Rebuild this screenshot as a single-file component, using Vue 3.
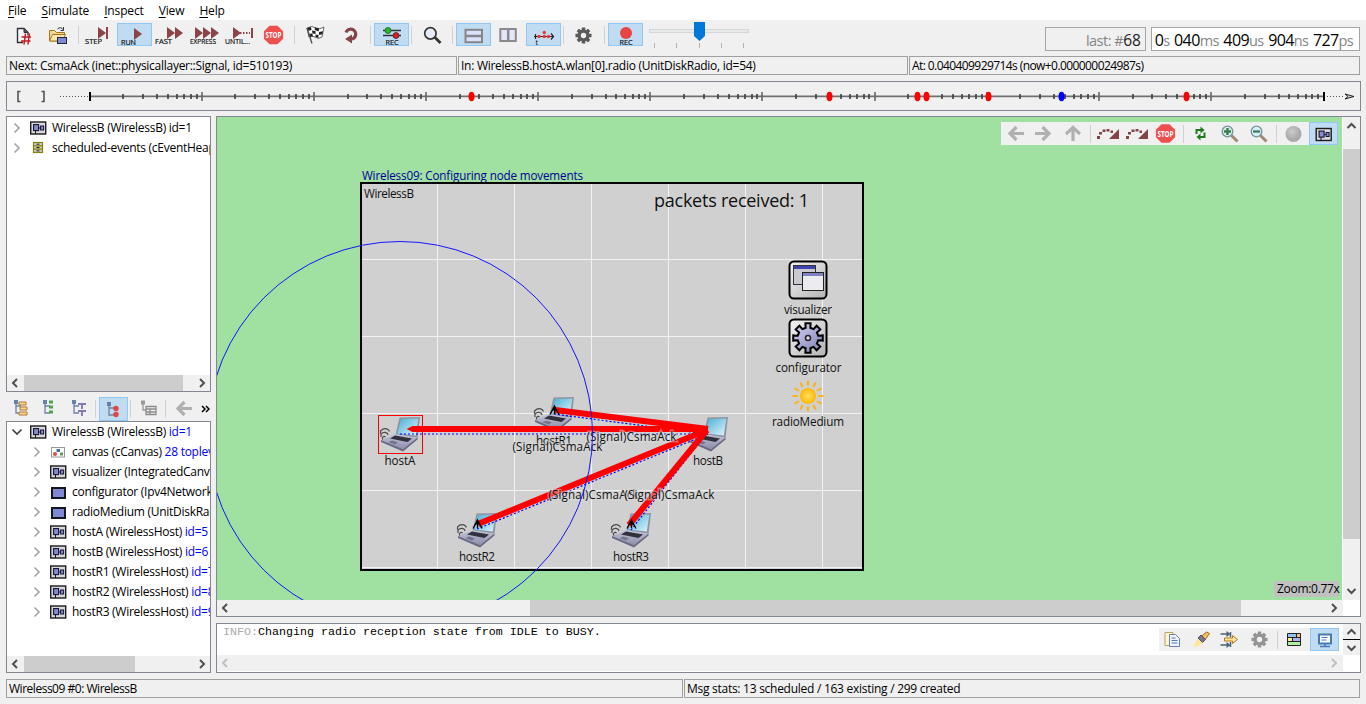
<script setup>
const moduleIcon = `<rect x=".700" y="1" width="15" height="12" fill="#d8d8dc" stroke="#1c1c1c" stroke-width="1.400"/><rect x="3.600" y="3.600" width="5" height="6" fill="#848cd2" stroke="#15152c" stroke-width="1.100"/><rect x="10.600" y="5" width="3" height="4" fill="#848cd2" stroke="#15152c"/><path d="M8.600 7H10.600M5.500 9.500V13" stroke="#15152c"/>`
const simpleIcon = `<rect x="2" y="3" width="13" height="10" fill="#7f88d4" stroke="#15171f" stroke-width="2"/>`
const canvasIcon = `<rect x="1.5" y="2.500" width="13" height="9.5" fill="#fff" stroke="#999"/><rect x="6.5" y="4" width="3.5" height="3" fill="#3f70a8"/><circle cx="5" cy="9" r="2" fill="#e04a3f"/><rect x="10" y="7.500" width="3" height="3" fill="#66975a"/>`
const heapIcon = `<rect x="3.500" y="1.500" width="9" height="10" fill="#cfcfc0" stroke="#85800c" stroke-width="1.200"/><path d="M3 4.800H13M3 8.200H13" stroke="#85800c" stroke-width="1.200"/><path d="M6.500 3.200H9.500M6.500 6.500H9.500M6.500 9.900H9.500" stroke="#222"/>`
const stop = (x, y) => `<path d="M${x - 4} ${y - 9.3}h8l5.6 5.6v7.4l-5.6 5.6h-8l-5.6-5.6v-7.4z" fill="#ee4f4f"/><text x="${x - 8}" y="${y + 3}" font-size="8" font-weight="bold" textLength="16" lengthAdjust="spacingAndGlyphs" fill="#fff">STOP</text>`
const cap = (x, t, w, y = 21.3) => `<text x="${x}" y="${y}" font-size="7.6" textLength="${w}" lengthAdjust="spacingAndGlyphs" fill="#111" stroke="#111" stroke-width=".2">${t}</text>`
const tri = x => `<path d="M${x} 4v12l8-6z" fill="#8d4448"/>`
const gear = (x, y, c, hole) => {
  let teeth = ''
  for (let i = 0; i < 8; i++) teeth += `<rect x="-1.8" y="-8" width="3.6" height="4" rx=".6" transform="rotate(${i * 45})"/>`
  return `<g transform="translate(${x} ${y})" fill="${c}">${teeth}<circle r="6"/><circle r="2.7" fill="${hole}"/></g>`
}
const lens = (fill, ring, x, y) => `<path d="M${x + 4} ${y + 4}l6 6" stroke="${ring}" stroke-width="3"/><circle cx="${x}" cy="${y}" r="5.3" fill="${fill}" stroke="#7294a0" stroke-width="1.3"/>`
const treeStem = `<path d="M8 5V16H13M8 9H13" fill="none" stroke="#6c83a3" stroke-width="1.3"/><rect x="6" y="3" width="4" height="4" fill="#6582aa"/>`

const icons = {
  fresh: `<path d="M17 19.500H11.500V5.500h6.500l4 4v3" fill="#f7f7fa" stroke="#30303c" stroke-width="1.4"/><path d="M18 5.500v4h4" fill="#555" stroke="#30303c"/><path d="M19.500 10.500l-1.500 11M23.500 10.500l-1.500 11M15.500 14h9.500M15 18h9.500" stroke="#c41a22" stroke-width="1.500" fill="none"/>`,
  open: `<path d="M8.500 18V7.500h5l2 2h8v8.500z" fill="#f3d68e" stroke="#a8731c"/><path d="M8.500 18l3-6.500h13l-3 6.500z" fill="#fbe7ac" stroke="#a8731c"/><path d="M16.500 6q3-3 6 1M22.500 4v3.500h-3" fill="none" stroke="#333"/><rect x="16.500" y="14.500" width="9" height="6" fill="#7f88d4" stroke="#26263c"/>`,
  step: tri(16) + `<rect x="24" y="4" width="2" height="12" fill="#8d4448"/>` + cap(3, 'STEP', 17),
  run: `<path d="M17 5v12l8-6z" fill="#8d4448"/>` + cap(4, 'RUN', 15, 22),
  fast: tri(15) + tri(23) + cap(3, 'FAST', 17),
  express: tri(8) + tri(16) + tri(24) + cap(3, 'EXPRESS', 26),
  until: tri(11) + `<path d="M18 10h10" stroke="#8d4448" stroke-width="2" stroke-dasharray="1.5 1.5"/><rect x="29" y="5" width="2" height="10" fill="#8d4448"/>` + cap(3, 'UNTIL...', 25),
  stop: stop(16.5, 12),
  flag: `<g transform="translate(9 3)"><path d="M0 2q5-3 9 0 4 2 8-1l-2 10q-4 3-7 0-3-2-6 0z" fill="#fff" stroke="#444" stroke-width=".8"/><path d="M0 2l4-1 .5 3-4 1zM8 1.5l4 1-.3 3-4-1.5zM5 4.5l3.5.5v3l-3-.5zM12 6l4-.7-.6 3-3.5.6zM1.5 8l3.8-.5.7 3-4 .5zM8.5 8.5l3 .5v3l-3-1z" fill="#222"/><path d="M0 2l5 15.5" stroke="#555" stroke-width="1.4"/></g>`,
  rerun: `<g transform="translate(1 0)"><path d="M12 9.500a5 5 0 1 1 6 6.500" fill="none" stroke="#85464a" stroke-width="3.200"/><path d="M11 16l7-4.500v9z" fill="#85464a"/></g>`,
  recmsg: `<path d="M9 7.5h18M9 12.5h18" stroke="#333" stroke-width="1.5"/><circle cx="14" cy="7.5" r="3" fill="#2ab52f" stroke="#17651b" stroke-width=".8"/><circle cx="22" cy="12.5" r="3" fill="#c9262b" stroke="#641c1c" stroke-width=".8"/>` + cap(11.5, 'REC', 13, 22),
  find: `<path d="M19.500 14l6 6" stroke="#353535" stroke-width="2.800"/><circle cx="15.400" cy="10.400" r="5.700" fill="#e6ebfa" stroke="#353535" stroke-width="1.700"/>`,
  rows: `<rect x="9.5" y="6.8" width="16.5" height="12.4" fill="#dae0f8" stroke="#85868c" stroke-width="2"/><path d="M9 13h17" stroke="#85868c" stroke-width="2.5"/>`,
  cols: `<rect x="9.3" y="6" width="15.5" height="12" fill="#e2e6f6" stroke="#8a8a8e" stroke-width="2"/><path d="M17.2 6v12" stroke="#8a8a8e" stroke-width="2.5"/>`,
  timeline: `<path d="M8 13.5h19M9.500 11v5M25 10.500l2.500 3-2.500 3" stroke="#222" fill="none" stroke-width="1.2"/><g fill="#e63636"><circle cx="13" cy="13.5" r="1.7"/><circle cx="18.3" cy="9.5" r="1.7"/><circle cx="18.3" cy="13.5" r="1.7"/><circle cx="22.5" cy="13.5" r="1.7"/></g><text x="9.500" y="21.500" font-size="7">t</text>`,
  gear: gear(16.5, 12.5, '#5a5a5a', '#f0f0f0'),
  record: `<circle cx="18" cy="10" r="6" fill="#e74545"/>` + cap(11.5, 'REC', 13, 22),
  back: `<path d="M23 11.500H10M15.500 5L9 11.500l6.500 6.500" stroke="#b0b0b0" stroke-width="3.200" fill="none"/>`,
  forward: `<path d="M5 11.500H19M12.500 5l6.500 6.500-6.500 6.500" stroke="#b0b0b0" stroke-width="3.200" fill="none"/>`,
  up: `<path d="M14 19V6M7 12l7-6.500 7 6.500" stroke="#b0b0b0" stroke-width="3.200" fill="none"/>`,
  jump: `<path d="M3 14h3v3H3zM5 10h3v2.500H5zM8.500 7.500h3V10h-3zM12.500 7h3v2.500h-3zM16.500 8.500h2.500V11h-2.500z" fill="#824447"/><path d="M25 7v10h-10l3-3 2-2z" fill="#824447"/>`,
  stopSmall: stop(13.5, 11.5),
  refresh: `<path d="M9.500 12V8h5" stroke="#1c7d18" stroke-width="2" fill="none"/><path d="M13.500 4.500v7l4-3.500z" fill="#1c7d18"/><path d="M17.500 10.500v4.500h-5" stroke="#1c7d18" stroke-width="2" fill="none"/><path d="M13.500 11.500v7l-4-3.500z" fill="#1c7d18"/>`,
  zoomin: lens('#d8ebe5', '#a18a72', 11.5, 9.5) + `<path d="M8 9.500h7M11.500 6v7" stroke="#35804d" stroke-width="2.400"/>`,
  zoomout: lens('#d8eff3', '#a18a72', 11.5, 9.5) + `<path d="M8 9.500h7" stroke="#3c7560" stroke-width="2.200"/>`,
  ball: `<defs><radialGradient id="ball" cx=".4" cy=".35"><stop offset="0" stop-color="#cbcbcb"/><stop offset="1" stop-color="#aaaaaa"/></radialGradient></defs><circle cx="13.500" cy="12" r="8" fill="url(#ball)"/>`,
  network: `<g transform="translate(6.500 5.500)">${moduleIcon}</g>`,
  treeFolders: `<g transform="translate(2 0)">${treeStem}<path d="M11 5h7v3h-7zM12 10h7v3h-7zM11 15h8v3h-8z" fill="#f6d893" stroke="#b37b31"/></g>`,
  treeDots: `<g transform="translate(2 0)">${treeStem}<path d="M12 5h4M12 10h4M12 15h4" stroke="#4ba544" stroke-width="3"/></g>`,
  treeText: `<g transform="translate(2 0)">${treeStem}<path d="M12 7h8M16 7v5M12 14h8M16 14v5" stroke="#8777b5" stroke-width="1.900"/></g>`,
  treeRed: `<g transform="translate(2 2)">${treeStem}<circle cx="15" cy="9.500" r="2.700" fill="#e34444"/><circle cx="15" cy="15.500" r="2.700" fill="#e34444"/></g>`,
  treeGrid: `<g transform="translate(1 1)"><path d="M8 5V12H11" fill="none" stroke="#999" stroke-width="1.300"/><rect x="6" y="2.500" width="4" height="4" fill="#999"/><path d="M11 8.500h10v8h-10zM11 11h10M11 14h10M15 11v6" stroke="#8c8c8c" fill="none" stroke-width="1.300"/></g>`,
  copy: `<path d="M6 4.500h8v13h-8z" fill="#fff5ce" stroke="#b6a46a"/><path d="M10.500 6.500h6l4 4v8h-10z" fill="#edf3ff" stroke="#6b7fa5"/><path d="M12.500 10h4M12.500 12.500h6M12.500 15h6" stroke="#527bb4"/>`,
  light: `<path d="M12.500 9l6-5 3 1.500-5 7z" fill="#f4be58" stroke="#a96727"/><path d="M10 10l3-3 4.500 4.500-3 3z" fill="#7d7584" stroke="#515365"/><path d="M9.500 10.500l5 4.500-4 3-5 .5z" fill="#ffe796"/>`,
  filter: `<path d="M3.500 6h8M3.500 17h8M13.500 4v5M13.500 14v5" stroke="#4b6177" stroke-width="1.500"/><path d="M9.500 3l4 3-4 3M9.500 14l4 3-4 3" fill="#4b6177"/><path d="M7.500 10h8V7.500l5 4-5 4V13h-8z" fill="#ffe5a1" stroke="#b57819"/>`,
  gearSmall: gear(13.5, 11.5, '#949494', '#f0f0f0'),
  table: `<g transform="translate(-1 0)"><rect x="7.500" y="5.500" width="13" height="12" fill="#fff"/><path d="M8 6h8v3h-8z" fill="#8dc4f4"/><path d="M17 6h3v3h-3z" fill="#efc17b"/><path d="M8 10h4v3h-4z" fill="#faef8a"/><path d="M13 10h7v3h-7z" fill="#b1aff4"/><path d="M8 14h12v3h-12z" fill="#acf0a4"/><path d="M7.500 5.500h13v12h-13zM7.500 9.500h13M7.500 13.500h13M16.500 5.500v4M12.500 9.500v4" stroke="#222" fill="none"/></g>`,
  monitor: `<rect x="9" y="6.500" width="12" height="9" fill="#fff" stroke="#4979b5" stroke-width="2"/><path d="M11.500 9.500h6M11.500 12h5" stroke="#4979b5"/><path d="M15 16v2M10 18.500h10" stroke="#4979b5" stroke-width="1.600"/>`
}
const mainTools = ['fresh', 'open', '|', 'step', 'run*', 'fast', 'express', 'until', 'stop', '|', 'flag', 'rerun', '|', 'recmsg*', '|', 'find', '|', 'rows*', 'cols', 'timeline*', '|', 'gear', '|', 'record*']
const treeTools = ['treeFolders', 'treeDots', 'treeText', '|', 'treeRed*', '|', 'treeGrid', '|', 'back']
const canvasTools = ['back', 'forward', 'up', '|', 'jump', 'jump', 'stopSmall', '|', 'refresh', 'zoomin', 'zoomout', '|', 'ball', 'network*']
const logTools = ['copy', 'light', 'filter', 'gearSmall', '|', 'table', 'monitor*']
const pick = t => icons[t.replace('*', '')]

const topTree = [
  { icon: moduleIcon, text: 'WirelessB (WirelessB) id=1' },
  { icon: heapIcon, text: 'scheduled-events (cEventHeap)' }
]
const tree = [
  { icon: moduleIcon, text: 'WirelessB (WirelessB)', extra: 'id=1', root: true },
  { icon: canvasIcon, text: 'canvas (cCanvas)', extra: '28 toplevel' },
  { icon: moduleIcon, text: 'visualizer (IntegratedCanvas)', extra: '' },
  { icon: simpleIcon, text: 'configurator (Ipv4NetworkC)', extra: '' },
  { icon: simpleIcon, text: 'radioMedium (UnitDiskRadio)', extra: '' },
  { icon: moduleIcon, text: 'hostA (WirelessHost)', extra: 'id=5' },
  { icon: moduleIcon, text: 'hostB (WirelessHost)', extra: 'id=6' },
  { icon: moduleIcon, text: 'hostR1 (WirelessHost)', extra: 'id=7' },
  { icon: moduleIcon, text: 'hostR2 (WirelessHost)', extra: 'id=8' },
  { icon: moduleIcon, text: 'hostR3 (WirelessHost)', extra: 'id=9' }
]

const ticks = []
for (let d = 0; d < 11; d++) {
  for (let k = 1; k < 10; k++) ticks.push({ x: Math.floor(90 + 112.15 * (d + Math.log10(k))), major: k === 1 && d > 0 })
}
const events = [471.5, 829.5, 917.5, 926.5, 988.5, 1186.5]
const clock = [['0', 's'], ['040', 'ms'], ['409', 'us'], ['904', 'ns'], ['727', 'ps']]

const hosts = [
  { x: 400, y: 434, label: 'hostA', w: 31, ly: 465, waves: true },
  { x: 554, y: 414, label: 'hostR1', w: 36, ly: 445, waves: true },
  { x: 708, y: 434, label: 'hostB', w: 30, ly: 465 },
  { x: 477, y: 530, label: 'hostR2', w: 36, ly: 561, waves: true },
  { x: 631, y: 530, label: 'hostR3', w: 36, ly: 561, waves: true }
]
const signals = [[412, 429, 708, 429], [555, 410, 708, 429], [478, 524, 707, 430], [629, 525, 707, 430]]
const links = [[400, 434, 708, 434], [554, 414, 706, 434], [477, 529, 708, 434], [631, 530, 706, 434]]
const masts = [[554.5, 409], [477.5, 523], [631.5, 523]]
const captions = [[512.5, 451], [586.5, 441], [548.5, 499], [624.5, 499]]
const cog = Array.from({ length: 8 }, (_, i) => {
  const p = (r, a) => { const t = (i * 45 + a) * Math.PI / 180; return `${(r * Math.sin(t)).toFixed(2)},${(-r * Math.cos(t)).toFixed(2)}` }
  return [p(15, -10), p(15, 10), p(10.5, 13), p(10.5, 32)].join(' ')
}).join(' ')
</script>

<template>
  <div class="window">
    <nav class="menubar">
      <span><u>F</u>ile</span><span><u>S</u>imulate</span><span><u>I</u>nspect</span><span><u>V</u>iew</span><span><u>H</u>elp</span>
    </nav>
    <div class="toolbar">
      <template v-for="(t, i) in mainTools" :key="i">
        <i v-if="t === '|'" class="sep"></i>
        <span v-else class="tool" :class="{ on: t.endsWith('*') }"><svg width="35" height="24" v-html="pick(t)"></svg></span>
      </template>
      <svg class="slider" width="110" height="32">
        <rect x="6.500" y="9.500" width="99" height="3" fill="#e7eaea" stroke="#d6d6d6" />
        <path v-for="x in [11.5, 33.5, 56.5, 78.5, 100.5]" :key="x" :d="`M${x} 23v5`" stroke="#b5b5a8" />
        <path d="M51 2h11v14l-5.500 5-5.500-5z" fill="#0078d7" />
      </svg>
      <div class="event-box">last: #<b>68</b></div>
      <div class="clock"><span v-for="c in clock" :key="c[1]"><b>{{ c[0] }}</b>{{ c[1] }}</span></div>
    </div>
    <div class="info">
      <div>Next: CsmaAck (inet::physicallayer::Signal, id=510193)</div>
      <div>In: WirelessB.hostA.wlan[0].radio (UnitDiskRadio, id=54)</div>
      <div class="numeric">At: 0.040409929714s (now+0.000000024987s)</div>
    </div>
    <div class="timeline">
      <svg width="1352" height="27" viewBox="7 82 1352 27">
        <path d="M20.500 91.500H18V101.500H20.500M41.500 91.500H44V101.500H41.500" fill="none" stroke="#555" stroke-width="1.600" />
        <path d="M60 96.500H88M1327 96.500H1345" stroke="#555" stroke-dasharray="1 2" />
        <path d="M90 96.300H1324" stroke="#707070" stroke-width="1.800" />
        <path v-for="(t, i) in ticks" :key="i" :d="t.major ? `M${t.x} 92v9` : `M${t.x} 94v5`" :stroke="t.major ? '#666' : '#3c3c3c'" stroke-width="1.600" />
        <path d="M90 92v9M1324 92v9" stroke="#000" stroke-width="2" />
        <path d="M1345 94l9 2.500-9 2.500 3-2.500z" fill="#ccc" stroke="#111" stroke-width=".900" />
        <ellipse v-for="x in events" :key="x" :cx="x" cy="96.500" rx="3" ry="4.800" fill="#f00" />
        <ellipse cx="1061.500" cy="96.500" rx="3" ry="4.800" fill="#00f" />
      </svg>
    </div>

    <main class="main">
      <aside class="left">
        <section class="panel top-tree">
          <div class="rows">
            <div v-for="r in topTree" :key="r.text" class="row">
              <svg class="chev" width="8" height="12"><path d="M1.500 1.500l4.500 4.500-4.500 4.500" /></svg>
              <svg class="glyph" width="17" height="14" v-html="r.icon"></svg><span>{{ r.text }}</span>
            </div>
          </div>
          <div class="hbar"><svg width="17" height="16"><path d="M10 4L6 8l4 4" /></svg><i class="thumb first"></i><svg width="17" height="16"><path d="M7 4l4 4-4 4" /></svg></div>
        </section>
        <div class="toolbar small">
          <template v-for="(t, i) in treeTools" :key="i">
            <i v-if="t === '|'" class="sep"></i>
            <span v-else class="tool" :class="{ on: t.endsWith('*') }"><svg width="29" height="24" v-html="pick(t)"></svg></span>
          </template>
          <svg width="12" height="24"><path d="M4 9l3 3-3 3M8 9l3 3-3 3" stroke="#000" stroke-width="1.500" fill="none" /></svg>
        </div>
        <section class="panel bottom-tree">
          <div class="rows">
            <div v-for="r in tree" :key="r.text" class="row" :class="{ child: !r.root }">
              <svg class="chev" :class="{ open: r.root }" width="8" height="12"><path d="M1.500 1.500l4.500 4.500-4.500 4.500" /></svg>
              <svg class="glyph" width="17" height="14" v-html="r.icon"></svg><span>{{ r.text }} <em>{{ r.extra }}</em></span>
            </div>
          </div>
          <div class="hbar"><svg width="17" height="16"><path d="M10 4L6 8l4 4" /></svg><i class="thumb second"></i><svg width="17" height="16"><path d="M7 4l4 4-4 4" /></svg></div>
        </section>
      </aside>

      <section class="right">
        <div class="panel canvas-panel">
          <div class="canvas">
            <svg class="scene" width="1125" height="483" viewBox="217 117 1125 483">
              <defs>
                <linearGradient id="screen" x1="0" y1="0" x2="1" y2="1"><stop offset="0" stop-color="#49b0d7" /><stop offset="1" stop-color="#dff4fb" /></linearGradient>
                <linearGradient id="base" x1="0" y1="0" x2="0" y2="1"><stop offset="0" stop-color="#c4c4da" /><stop offset="1" stop-color="#8d8da9" /></linearGradient>
                <linearGradient id="tile" x1="0" y1="0" x2="1" y2="1"><stop offset="0" stop-color="#f5f5f5" /><stop offset="1" stop-color="#b2b2b2" /></linearGradient>
                <linearGradient id="cogfill" x1="0" y1="0" x2="1" y2="1"><stop offset="0" stop-color="#d5d5f2" /><stop offset="1" stop-color="#7d7db5" /></linearGradient>
                <radialGradient id="sun"><stop offset="0" stop-color="#ffe163" /><stop offset="1" stop-color="#ffb600" /></radialGradient>
                <g id="laptop">
                  <path d="M-.500-16.500L20-17 17.500 4-4.500 1z" fill="#8f949f" />
                  <path d="M1-15L18.300-15.500 15.800 1.500-2.500-.5z" fill="url(#screen)" />
                  <path d="M-5.500 0L17.500 3.500 3 15-19 6z" fill="url(#base)" />
                  <path d="M-5 1.500L12 4.500 7.500 8-10 4.500z" fill="#30313a" />
                  <path d="M-8 6.500l6 1.700-3 2.300-6.500-2.200z" fill="#74758d" />
                  <path d="M-19 6L3 15 17.500 3.500v2L3 17.500-19 8z" fill="#696a83" />
                </g>
                <g id="waves" fill="none" stroke="#4a4a4a" stroke-width="1.200">
                  <path d="M-17.500 5.500v-2q1.500-2 3-.5M-19 3v-3q3-3 6.500-.5l.5 1.500M-19.500-.500v-2.500q4-4 8-1l1 1.500" />
                </g>
              </defs>
              <text x="362" y="180" textLength="221" fill="#000098">Wireless09: Configuring node movements</text>
              <rect x="361" y="183" width="502" height="387" fill="#d0d0d0" stroke="#000" stroke-width="2" />
              <path d="M437.500 184V569M514.500 184V569M591.500 184V569M668.500 184V569M745.500 184V569M822.500 184V569M362 259.500H862M362 336.500H862M362 413.500H862M362 490.500H862M362 567.500H862" stroke="#f2f2f2" />
              <text x="364" y="198" textLength="50">WirelessB</text>
              <text class="counter" x="654" y="207" textLength="155">packets received: 1</text>

              <g transform="translate(808 280)">
                <rect x="-18.500" y="-18.500" width="37" height="37" rx="4.500" fill="url(#tile)" stroke="#000" stroke-width="2" />
                <rect x="-14.500" y="-14.500" width="22" height="19" fill="#c9c9cf" stroke="#333" /><rect x="-14" y="-14" width="21" height="3" fill="#3f43b2" />
                <rect x="-5.500" y="-7.500" width="21" height="18" fill="#ececf0" stroke="#222" /><rect x="-5" y="-7" width="20" height="3" fill="#8182c2" />
              </g>
              <text x="784" y="314" textLength="48">visualizer</text>
              <g transform="translate(808 338)">
                <rect x="-18.500" y="-18.500" width="37" height="37" rx="4.500" fill="url(#tile)" stroke="#000" stroke-width="2" />
                <polygon :points="cog" fill="url(#cogfill)" stroke="#000" stroke-width="2" />
                <circle r="2.500" fill="#ddd" stroke="#222" stroke-width="1.500" />
              </g>
              <text x="775.500" y="372" textLength="66">configurator</text>
              <g transform="translate(808 396)">
                <path v-for="i in 12" :key="i" d="M0-10.500V-15.500" :transform="`rotate(${i * 30})`" stroke="#ffb300" stroke-width="1.900" />
                <circle r="8" fill="url(#sun)" />
              </g>
              <text x="772" y="426" textLength="72">radioMedium</text>

              <g v-for="h in hosts" :key="h.label">
                <use href="#laptop" :x="h.x" :y="h.y" />
                <use v-if="h.waves" href="#waves" :x="h.x" :y="h.y" />
                <text :x="h.x - h.w / 2" :y="h.ly" :textLength="h.w">{{ h.label }}</text>
              </g>
              <rect x="378.500" y="415.500" width="44" height="38" fill="none" stroke="#f00" />
              <path v-for="(l, i) in links" :key="'l' + i" :d="`M${l[0]} ${l[1]}L${l[2]} ${l[3]}`" stroke="#00f" stroke-width="1.200" stroke-dasharray="2 2" />
              <path v-for="(s, i) in signals" :key="'s' + i" :d="`M${s[0]} ${s[1]}L${s[2]} ${s[3]}`" stroke="#f00" stroke-width="6" />
              <path d="M406.500 429l6-3v6z" fill="#f00" />
              <path v-for="(m, i) in masts" :key="'m' + i" :transform="`translate(${m[0]} ${m[1]})`" d="M-4.500 5.500L0-3 4.500 5.500M0-3V5M-2 1.500L0-1 2 1.500" fill="none" stroke="#000" stroke-width="1.300" />
              <text v-for="(c, i) in captions" :key="'c' + i" class="halo" :x="c[0]" :y="c[1]" textLength="90">(Signal)CsmaAck</text>
              <circle cx="400" cy="434" r="192.500" fill="none" stroke="#1515ff" />
            </svg>
            <div class="toolbar small over-canvas">
              <template v-for="(t, i) in canvasTools" :key="i">
                <i v-if="t === '|'" class="sep"></i>
                <span v-else class="tool" :class="{ on: t.endsWith('*') }"><svg width="29" height="24" v-html="pick(t)"></svg></span>
              </template>
            </div>
            <div class="zoom">Zoom:0.77x</div>
          </div>
          <div class="vbar"><svg width="17" height="17"><path d="M4.500 11l4-4 4 4" /></svg><i class="thumb"></i><svg width="17" height="17"><path d="M4.500 6l4 4 4-4" /></svg></div>
          <div class="hbar"><svg width="17" height="16"><path d="M10 4L6 8l4 4" /></svg><i class="thumb third"></i><svg width="17" height="16"><path d="M6 4l4 4-4 4" /></svg></div>
        </div>
        <div class="panel log-panel">
          <div class="log">
            <pre><i>INFO:</i>Changing radio reception state from IDLE to BUSY.</pre>
            <div class="toolbar small over-log">
              <template v-for="(t, i) in logTools" :key="i">
                <i v-if="t === '|'" class="sep"></i>
                <span v-else class="tool" :class="{ on: t.endsWith('*') }"><svg width="29" height="24" v-html="pick(t)"></svg></span>
              </template>
            </div>
          </div>
          <div class="vbar"><svg width="17" height="15"><path d="M4.500 10l4-4 4 4" /></svg><b class="mark"></b><svg width="17" height="15"><path d="M4.500 6l4 4 4-4" /></svg></div>
          <div class="hbar disabled"><svg width="17" height="16"><path d="M10 4L6 8l4 4" /></svg><svg width="17" height="16"><path d="M6 4l4 4-4 4" /></svg></div>
        </div>
      </section>
    </main>
    <footer class="status"><div class="config">Wireless09 #0: WirelessB</div><div>Msg stats: 13 scheduled / 163 existing / 299 created</div></footer>
  </div>
</template>

<style>
body { background: #f0f0f0; overflow: hidden; }
</style>

<style scoped>
* { box-sizing: border-box; }
svg { display: block; flex: none; }
.window { width: 1366px; height: 704px; background: #f0f0f0; color: #000; display: flex; flex-direction: column; font: 12px/18px "Open Sans", "Noto Sans", sans-serif; letter-spacing: -.27px; overflow: hidden; white-space: nowrap; }
.menubar { height: 20px; background: #fff; display: flex; gap: 15px; padding: 1px 8px 0; line-height: 20px; letter-spacing: -.14px; }
.menubar u { text-underline-offset: 2px; text-decoration-thickness: 1px; }
.toolbar { display: flex; height: 36px; padding: 3px 6px 0; }
.tool { width: 35px; height: 23px; flex: none; }
.tool svg { letter-spacing: 0; }
.tool.on { background: #c0dcf3; box-shadow: inset 0 0 0 1px #90c8f6; }
.sep { width: 6px; height: 18px; margin-top: 3px; flex: none; background: linear-gradient(90deg, transparent 2px, #d0d0d0 2px, #d0d0d0 3px, transparent 3px); }
.slider { margin-top: -3px; }
.event-box, .clock { height: 24px; margin-top: 4px; border: 1px solid #a5a5a5; font-size: 14.5px; line-height: 24px; color: #858585; letter-spacing: -.5px; }
.event-box { width: 101px; margin-left: 292px; text-align: right; padding-right: 4px; }
.event-box b { color: #222; font-weight: 400; font-size: 15.5px; letter-spacing: -.1px; }
.clock { width: 210px; margin-left: 5px; background: #fff; display: flex; gap: 4.5px; padding-left: 3px; letter-spacing: -.6px; }
.clock b { color: #000; font-weight: 400; font-size: 16px; }
.info { display: grid; grid-template-columns: 451px 450px 451px; gap: 1px; margin: 0 6px; height: 19px; }
.info div, .status div { border: 1px solid #a0a0a0; padding-left: 2px; line-height: 18px; height: 19px; }
.info .numeric { letter-spacing: -.58px; }
.timeline { margin: 6px 5px 6px 6px; height: 30px; border: 1px solid #828790; }
.main { display: flex; gap: 5px; height: 557px; margin: -1px 5px 0 6px; }
.left { width: 205px; display: flex; flex-direction: column; }
.panel { border: 1px solid #828790; background: #fff; overflow: hidden; }
.top-tree { height: 276px; display: flex; flex-direction: column; }
.bottom-tree { height: 252px; display: flex; flex-direction: column; }
.rows { flex: 1; padding-top: 1px; overflow: hidden; }
.bottom-tree .rows { padding-top: 0; }
.row { height: 20px; display: flex; align-items: center; padding-left: 6px; }
.row.child { padding-left: 26px; }
.chev { margin-right: 9px; }
.chev path { fill: none; stroke: #a6a6a6; stroke-width: 1.7; }
.chev.open { transform: rotate(90deg); }
.chev.open path { stroke: #404040; }
.glyph { margin-right: 5px; }
.row em { font-style: normal; color: #00f; }
.hbar { height: 16px; flex: none; display: flex; background: #f0f0f0; }
.hbar path, .vbar path { fill: none; stroke: #505050; stroke-width: 2; }
.hbar svg:last-child { margin-left: auto; }
.hbar.disabled path { stroke: #bfbfbf; }
.thumb { background: #cdcdcd; }
.thumb.first { width: 159px; }
.thumb.second { width: 111px; }
.thumb.third { width: 711px; margin-left: 296px; }
.small { height: 29px; padding: 5px 0 0 0; }
.small .tool { width: 29px; height: 24px; }
.right { width: 1145px; display: flex; flex-direction: column; gap: 6px; }
.canvas-panel { height: 502px; display: grid; grid-template: 483px 17px / 1126px 17px; }
.canvas { position: relative; background: #a0e0a0; border-right: 1px solid #fff; }
.scene text { font-size: 11.7px; fill: #111; letter-spacing: 0; }
.scene text[fill] { fill: #000098; }
.scene .counter { font-size: 18px; }
.scene .halo { paint-order: stroke; stroke: rgba(216, 216, 216, .45); stroke-width: 3px; }
.over-canvas, .over-log { position: absolute; right: 4px; background: #f0f0f0; padding: 0; height: 23px; }
.over-canvas { top: 5px; }
.over-log { top: 4px; }
.over-canvas .tool, .over-log .tool { height: 23px; }
.zoom { position: absolute; right: 3px; bottom: 3px; width: 65px; height: 16px; line-height: 16px; background: #c0c0c0; padding-left: 3px; border-radius: 2px; letter-spacing: -.3px; }
.vbar { background: #f0f0f0; display: flex; flex-direction: column; justify-content: space-between; }
.vbar .thumb { height: 390px; margin-top: 15px; }
.vbar .thumb + svg { margin-top: auto; }
.log-panel { height: 50px; display: grid; grid-template: 31px 17px / 1126px 17px; }
.log { position: relative; }
.log pre { margin: 0; padding-left: 6px; font: 11.67px/17px "Liberation Mono", monospace; letter-spacing: 0; }
.log i { color: #aaa; font-style: normal; }
.vbar .mark { height: 1px; background: #000; flex: none; }
.status { display: grid; grid-template-columns: 677px 676px; gap: 1px; margin: 6px 6px 0; }
.status .config { letter-spacing: -.48px; }
</style>
